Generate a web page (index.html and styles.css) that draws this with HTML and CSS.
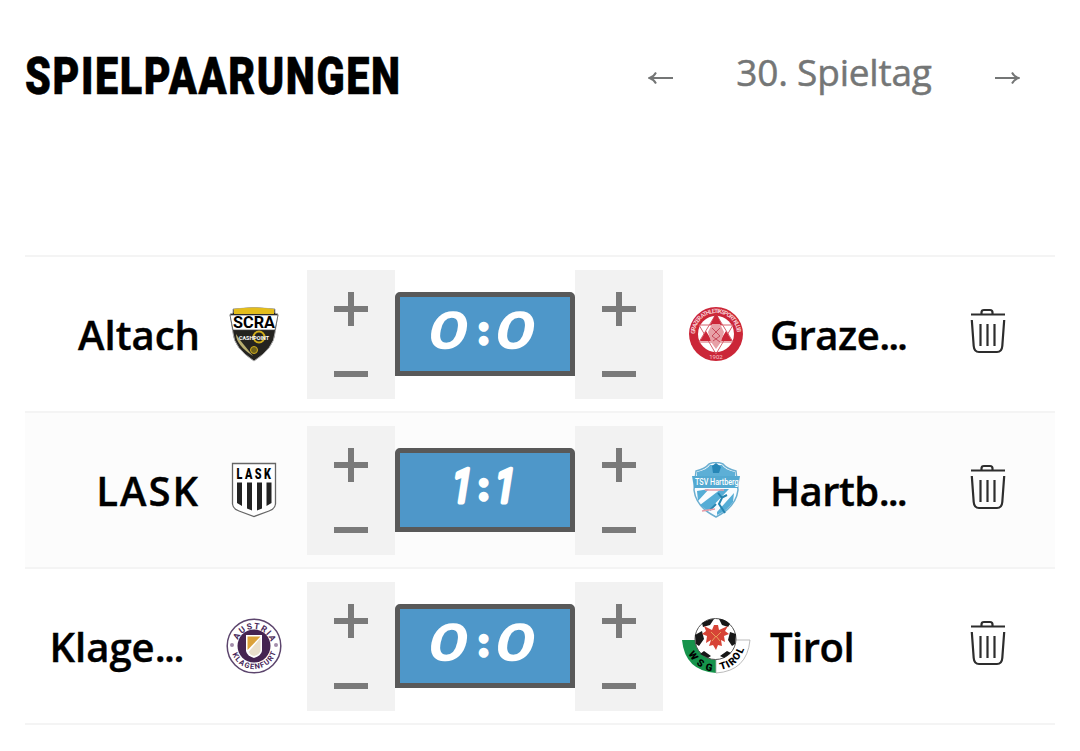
FILE: index.html
```html
<!DOCTYPE html>
<html lang="de">
<head>
    <meta charset="UTF-8">
    <meta name="viewport" content="width=device-width, initial-scale=1.0">
    <title>Spielpaarungen</title>
    <link rel="stylesheet" href="styles.css">
</head>
<body>

    <svg class="defs">
        <symbol id="trash" viewBox="0 0 36 46">
            <path d="M1 6.5H35M11.500 6V4.500Q11.500 2 14 2H20Q22.500 2 22.500 4.500V6M1.800 12L3.700 38Q4.200 44 9 44H27Q31.800 44 32.300 38L34.200 12M10.500 16V38M17.500 16V38M24.500 16V38" fill="none" stroke="#2d2d2d" stroke-width="2.2"/>
        </symbol>
        <path id="arcTop" d="M11 28A17 17 0 0 1 45 28"/>
        <path id="arcTopWide" d="M7 28A21 21 0 0 1 49 28"/>
        <path id="arcBottom" d="M5 28A23 23 0 0 0 51 28"/>
    </svg>

    <header class="header">
        <h1><span>SPIELPAARUNGEN</span></h1>
        <nav class="matchday">
            <svg class="arrow" width="26" height="14" viewBox="0 0 26 14"><path d="M25 7H2M8 1.500Q6 5.500 1.500 7Q6 8.500 8 12.500"/></svg>
            <span class="day">30. Spieltag</span>
            <svg class="arrow" width="26" height="14" viewBox="0 0 26 14"><path d="M1 7H24M18 1.500Q20 5.500 24.500 7Q20 8.500 18 12.500"/></svg>
        </nav>
    </header>

    <main class="matches">
        <div class="match">
            <div class="team home"><span>Altach</span></div>
            <div class="logo">
                <svg width="50" height="56" viewBox="0 0 50 56">
                    <path d="M4 3Q25 0 46 3V7L49 8L46 27Q45 42 25 55Q5 42 4 27L1 8L4 7Z" fill="#24231f" stroke="#aaa" stroke-width="1"/>
                    <path d="M5 3Q25 0 45 3V8H5Z" fill="#e4bd1c"/>
                    <path d="M1 9H49L46 24H4Z" fill="#fff" stroke="#444" stroke-width=".7"/>
                    <text x="25" y="22" font-size="16" font-weight="700" textLength="42" lengthAdjust="spacingAndGlyphs" text-anchor="middle">SCRA</text>
                    <path d="M7 28Q7 39 24 50L11 34Z" fill="#b7ad70"/>
                    <circle cx="30" cy="31" r="5.500" fill="none" stroke="#cfac1c" stroke-width="2"/>
                    <text x="25" y="34" font-size="6" font-weight="700" fill="#fff" textLength="30" lengthAdjust="spacingAndGlyphs" text-anchor="middle">CASHPOINT</text>
                    <circle cx="25" cy="44" r="3.500" fill="#6e611b" stroke="#cfac1c"/>
                </svg>
            </div>
            <div class="stepper"><i class="plus"></i><i class="minus"></i></div>
            <div class="score">
                <svg width="170" height="74" viewBox="0 0 170 74">
                    <text class="zero" transform="translate(45.5 49.500) skewX(-12) scale(1.32 1)">0</text>
                    <text class="colon" x="83.500" y="47">:</text>
                    <text class="zero" transform="translate(112.5 49.500) skewX(-12) scale(1.32 1)">0</text>
                </svg>
            </div>
            <div class="stepper"><i class="plus"></i><i class="minus"></i></div>
            <div class="logo">
                <svg width="56" height="56" viewBox="0 0 56 56">
                    <circle cx="28" cy="28" r="27" fill="#cb2638"/>
                    <circle cx="28" cy="28" r="18" fill="#fff"/>
                    <path d="M28 8L45 36H11ZM28 48L11 19H45Z" fill="none" stroke="#d7606d" stroke-width="1"/>
                    <path d="M28 7L34 19H22ZM12 35L18 25L24 35ZM44 35L38 25L32 35Z" fill="#cb2638"/>
                    <path d="M24 18H32L36 26L33 36L28 43L23 36L20 26Z" fill="#e7a0a6"/>
                    <path d="M24 22L32 30L25 35M32 22L24 30L32 36" fill="none" stroke="#c7495a"/>
                    <text class="ring" font-size="6" fill="#f7cbd0"><textPath href="#arcTopWide" startOffset="0" textLength="64">GRAZER ATHLETIKSPORT KLUB</textPath></text>
                    <text x="28" y="53" font-size="6" fill="#f7cbd0" text-anchor="middle">1902</text>
                </svg>
            </div>
            <div class="team away"><span>Graze<span class="dots">...</span></span></div>
            <svg class="trash"><use href="#trash"/></svg>
        </div>

        <div class="match shaded">
            <div class="team home caps"><span>LASK</span></div>
            <div class="logo">
                <svg width="46" height="56" viewBox="0 0 46 56">
                    <path d="M1.500 1.500H44.500V42Q44 47 38 49L23 54.500L8 49Q2 47 1.500 42Z" fill="#fff" stroke="#666" stroke-width="1.300"/>
                    <text transform="translate(5.500 17) scale(.72 1)" font-size="15" font-weight="900" letter-spacing="3.500">LASK</text>
                    <path d="M6 20.500H11V44L6 41ZM16 20.500H21V48.500L16 46.500ZM26 20.500H31V46.500L26 48.500ZM35.500 20.500H40.500V41L35.500 44Z" fill="#222"/>
                </svg>
            </div>
            <div class="stepper"><i class="plus"></i><i class="minus"></i></div>
            <div class="score">
                <svg width="170" height="74" viewBox="0 0 170 74">
                    <text class="one" transform="translate(60 49) skewX(-9) scale(.78 1)">1</text>
                    <text class="colon" x="83.500" y="47">:</text>
                    <text class="one" transform="translate(103 49) skewX(-9) scale(.78 1)">1</text>
                </svg>
            </div>
            <div class="stepper"><i class="plus"></i><i class="minus"></i></div>
            <div class="logo">
                <svg width="50" height="56" viewBox="0 0 50 56">
                    <path d="M5 9Q14 7 18 2Q25 -1 32 2Q36 7 45 9L47 28Q45 45 25 55Q5 45 3 28Z" fill="#f8fcff" stroke="#6baed0" stroke-width="1.500"/>
                    <path d="M6 10Q16 8 19 3H31Q34 8 44 10V15H6Z" fill="#5dafd6"/>
                    <path d="M21 4L25 1L30 5L28 11H22Z" fill="#2786b6"/>
                    <path d="M6 29L18 27L7 39ZM9 43L30 27H38L17 49ZM26 50L43 31L42 40Q36 49 26 53Z" fill="#55add6"/>
                    <path d="M27 31L31 36L28 42L34 51M30 36L36 33M25 42L19 48" fill="none" stroke="#2584b0" stroke-width="2"/>
                    <path d="M1 14H49L47 26H3Z" fill="#54a9d1"/>
                    <text transform="translate(4 23) scale(.8 1)" font-size="9" font-weight="500" fill="#fff">TSV Hartberg</text>
                    <path d="M14 28H33M11 49L24 47" stroke="#e69aa6" stroke-width="1.500"/>
                </svg>
            </div>
            <div class="team away"><span>Hartb<span class="dots">...</span></span></div>
            <svg class="trash"><use href="#trash"/></svg>
        </div>

        <div class="match">
            <div class="team home cut"><span>Klage<span class="dots">...</span></span></div>
            <div class="logo">
                <svg width="56" height="56" viewBox="0 0 56 56">
                    <circle cx="28" cy="28" r="26.800" fill="#fff" stroke="#5c456d" stroke-width="1.500"/>
                    <circle cx="28" cy="28" r="16.500" fill="#452451"/>
                    <path d="M20 17H36V33Q35 38 28 40Q21 38 20 33Z" fill="#fff"/>
                    <path d="M21.500 18.500H34.500L21.500 32Z" fill="#dba139"/>
                    <path d="M34.500 20V33Q33 37 28 38Q24 37 22.500 34Z" fill="#e9dfcb"/>
                    <text class="ring" font-size="8.500" fill="#49295a"><textPath href="#arcTop" startOffset="6" textLength="43">AUSTRIA</textPath></text>
                    <text class="ring" font-size="7.500" fill="#49295a"><textPath href="#arcBottom" startOffset="8" textLength="57">KLAGENFURT</textPath></text>
                    <circle cx="6" cy="27" r="2" fill="#a38eac"/><circle cx="50" cy="27" r="2" fill="#a38eac"/>
                </svg>
            </div>
            <div class="stepper"><i class="plus"></i><i class="minus"></i></div>
            <div class="score">
                <svg width="170" height="74" viewBox="0 0 170 74">
                    <text class="zero" transform="translate(45.5 49.500) skewX(-12) scale(1.32 1)">0</text>
                    <text class="colon" x="83.500" y="47">:</text>
                    <text class="zero" transform="translate(112.5 49.500) skewX(-12) scale(1.32 1)">0</text>
                </svg>
            </div>
            <div class="stepper"><i class="plus"></i><i class="minus"></i></div>
            <div class="logo">
                <svg width="70" height="56" viewBox="0 0 70 56">
                    <path d="M1 22H35V55Q4 53 1 22Z" fill="#16934b"/>
                    <path d="M35 22H69Q66 53 35 55Z" fill="#fff" stroke="#aaa" stroke-width=".8"/>
                    <circle cx="34.500" cy="21" r="20.500" fill="#fff" stroke="#555" stroke-width="1"/>
                    <path d="M21 5Q28 1 33 1L29 7L22 9ZM38 1Q44 1 49 6L47 9L41 7ZM14 17L21 13L23 21L18 28L15 26ZM55 16L49 14L47 22L51 28L54 26ZM23 33L30 38L27 40L19 36ZM46 33L39 38L43 40L50 35Z" fill="#181818"/>
                    <path d="M33 7H37L38 12L47 8L44 13L48 16L43 18L44 24L40 22L41 28L37 27L35 32L32 27L28 28L30 22L25 25L26 18L21 16L25 13L23 8L31 12Z" fill="#d74336"/>
                    <path d="M30 14L35 19L40 14M31 23L35 18L39 23" fill="none" stroke="#e9a15b"/>
                    <g font-size="10" font-weight="900">
                        <text transform="translate(7 36) rotate(55)">W</text>
                        <text transform="translate(15 46) rotate(35)">S</text>
                        <text transform="translate(24 52) rotate(12)">G</text>
                        <text transform="translate(40 52) rotate(-18)">T</text>
                        <text transform="translate(47 50) rotate(-28)">I</text>
                        <text transform="translate(51 48) rotate(-40)">R</text>
                        <text transform="translate(56 43) rotate(-52)">O</text>
                        <text transform="translate(61 36) rotate(-65)">L</text>
                    </g>
                </svg>
            </div>
            <div class="team away"><span>Tirol</span></div>
            <svg class="trash"><use href="#trash"/></svg>
        </div>
    </main>

</body>
</html>
```
FILE: styles.css
```css
body {
    margin: 0;
    padding: 0 25px;
    background-color: #fff;
    color: #000;
    font-family: "Open Sans", sans-serif;
    overflow: hidden;
}
.defs {
    display: block;
    width: 0;
    height: 0;
}
.header {
    display: flex;
    justify-content: space-between;
    height: 255px;
    box-sizing: border-box;
    padding-top: 46px;
}
h1 {
    margin: 0;
    width: 376px;
    font-family: Roboto, sans-serif;
    font-size: 52px;
    line-height: 62px;
    font-weight: 900;
    letter-spacing: 2px;
    white-space: nowrap;
    -webkit-text-stroke: 0.6px #000;
}
h1 span {
    display: inline-block;
    transform: scaleX(0.795);
    transform-origin: left;
}
.matchday {
    display: flex;
    align-items: center;
    justify-content: space-between;
    width: 372px;
    height: 54px;
    margin-right: 35px;
    color: #747676;
}
.day {
    font-size: 37px;
    letter-spacing: -0.2px;
    font-weight: 500;
    line-height: 54px;
    margin-top: -3px;
    -webkit-text-stroke: 0.5px #747676;
}
.arrow {
    fill: none;
    stroke: #747676;
    stroke-width: 1.900;
    margin-top: 9px;
}
.matches {
    border-bottom: 2px solid #f4f4f4;
}
.match {
    display: grid;
    grid-template-columns: 175px 107px 88px 180px 88px 106px 192px 94px;
    align-items: center;
    height: 156px;
    box-sizing: border-box;
    border-top: 2px solid #f4f4f4;
}
.shaded {
    background-color: #fcfcfc;
}
.team {
    font-size: 40px;
    line-height: 54px;
    font-weight: 600;
    white-space: nowrap;
    padding-top: 1px;
    -webkit-text-stroke: 0.4px #000;
}
.dots {
    letter-spacing: -1.5px;
}
.home {
    text-align: right;
}
.cut {
    padding-right: 17px;
}
.caps {
    letter-spacing: 2px;
}
.away {
    padding-left: 1px;
    letter-spacing: -0.5px;
}
.away .dots {
    letter-spacing: -2px;
}
.logo {
    display: flex;
    justify-content: center;
}
.logo text {
    font-family: Roboto, sans-serif;
}
.logo .ring {
    font-weight: 700;
}
.stepper {
    height: 129px;
    background-color: #f2f2f2;
    display: flex;
    flex-direction: column;
    align-items: center;
    box-sizing: border-box;
    padding-top: 22px;
}
.plus {
    width: 34px;
    height: 34px;
    background: linear-gradient(#7a7a7a, #7a7a7a) center / 34px 6px no-repeat,
                linear-gradient(#7a7a7a, #7a7a7a) center / 6px 34px no-repeat;
}
.minus {
    width: 34px;
    height: 6px;
    margin-top: 45px;
    background-color: #7a7a7a;
}
.score {
    height: 84px;
    box-sizing: border-box;
    border: 5px solid #595959;
    border-radius: 5px 5px 0 0;
    background-color: #4e97c9;
}
.score svg {
    display: block;
}
.score text {
    fill: #fff;
    stroke: #fff;
    stroke-linejoin: round;
    text-anchor: middle;
}
.score .zero {
    font-family: Inter, sans-serif;
    font-size: 46px;
    font-weight: 300;
    stroke-width: 3.800px;
}
.score .one {
    font-family: Roboto, sans-serif;
    font-size: 46px;
    stroke-width: 5px;
}
.score .colon {
    font-family: Lato, sans-serif;
    font-size: 39px;
    font-weight: 900;
    stroke-width: 3.500px;
}
.trash {
    width: 36px;
    height: 46px;
    justify-self: center;
    margin: 0 40px 6px 0;
}
```
